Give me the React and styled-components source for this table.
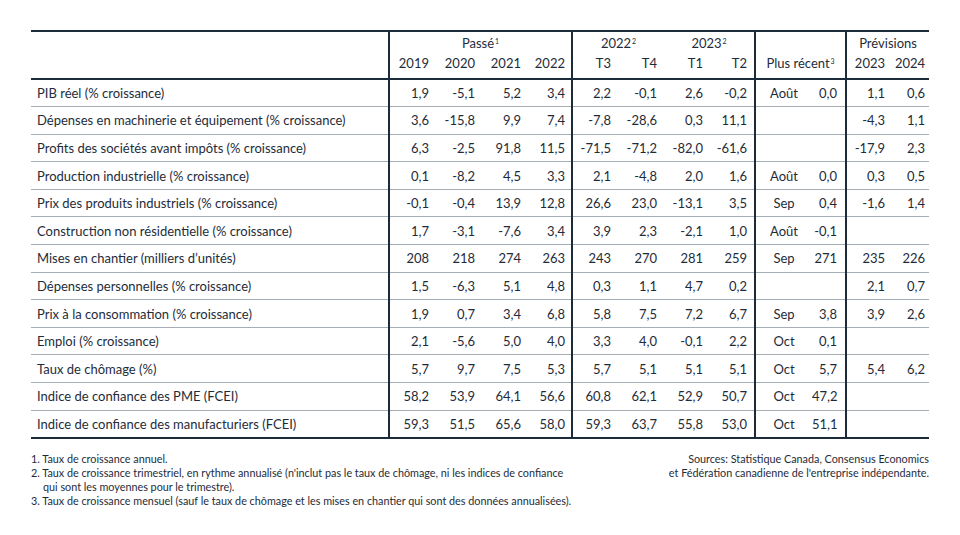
import React from 'react';
import styled, { createGlobalStyle } from 'styled-components';

const GlobalStyle = createGlobalStyle`
  html, body {
    margin: 0;
    padding: 0;
    background: #ffffff;
  }
  body {
    font-family: Lato, 'Liberation Sans', sans-serif;
    color: #1e2c3a;
  }
`;

const INK = '#1c2b39';
const RULE = '#a7afb6';

const Page = styled.div`
  width: 960px;
  height: 535px;
  box-sizing: border-box;
  padding: 30px 31px 0 31px;
`;

const Table = styled.table`
  width: 898px;
  border-collapse: collapse;
  table-layout: fixed;
  border-top: 2px solid ${INK};
  border-bottom: 2px solid ${INK};
  font-size: 13px;
  color: #1e2c3a;
`;

const HeadCell = styled.th`
  font-weight: 400;
  padding: ${p => (p.$last ? '1px' : '0')} ${p => p.$pad ?? 7}px ${p => (p.$last ? '7px' : '0')} 0;
  text-align: ${p => p.$align || 'right'};
  border-right: ${p => (p.$divider ? `2px solid ${INK}` : 'none')};
  border-bottom: ${p => (p.$last ? `2px solid ${INK}` : 'none')};
  height: ${p => (p.$last ? 15 : 23)}px;
  vertical-align: middle;
  white-space: nowrap;
  line-height: 15px;
`;

const Row = styled.tr`
  height: 27.6px;
  border-top: 1px solid ${RULE};
  &:first-child {
    border-top: none;
  }
`;

const Label = styled.td`
  padding: 0 0 0 6px;
  text-align: left;
  border-right: 2px solid ${INK};
  white-space: nowrap;
`;

const Num = styled.td`
  padding: 0 ${p => p.$pad ?? 7}px 0 0;
  text-align: ${p => p.$align || 'right'};
  border-right: ${p => (p.$divider ? `2px solid ${INK}` : 'none')};
  white-space: nowrap;
`;

const Sup = styled.sup`
  font-size: 7px;
  vertical-align: top;
  position: relative;
  top: -2px;
  margin-left: 1px;
`;

const Footer = styled.div`
  display: flex;
  justify-content: space-between;
  align-items: flex-start;
  margin-top: 13px;
  font-size: 10.8px;
  line-height: 14px;
  color: #1e2c3a;
`;

const Notes = styled.ol`
  list-style: none;
  margin: 0;
  padding: 0;
`;

const Note = styled.li`
  padding-left: 12px;
  text-indent: -12px;
`;

const Sources = styled.div`
  text-align: right;
`;

const rows = [
  ['PIB réel (% croissance)', ['1,9', '-5,1', '5,2', '3,4'], ['2,2', '-0,1', '2,6', '-0,2'], ['Août', '0,0'], ['1,1', '0,6']],
  ['Dépenses en machinerie et équipement (% croissance)', ['3,6', '-15,8', '9,9', '7,4'], ['-7,8', '-28,6', '0,3', '11,1'], ['', ''], ['-4,3', '1,1']],
  ['Profits des sociétés avant impôts (% croissance)', ['6,3', '-2,5', '91,8', '11,5'], ['-71,5', '-71,2', '-82,0', '-61,6'], ['', ''], ['-17,9', '2,3']],
  ['Production industrielle (% croissance)', ['0,1', '-8,2', '4,5', '3,3'], ['2,1', '-4,8', '2,0', '1,6'], ['Août', '0,0'], ['0,3', '0,5']],
  ['Prix des produits industriels (% croissance)', ['-0,1', '-0,4', '13,9', '12,8'], ['26,6', '23,0', '-13,1', '3,5'], ['Sep', '0,4'], ['-1,6', '1,4']],
  ['Construction non résidentielle (% croissance)', ['1,7', '-3,1', '-7,6', '3,4'], ['3,9', '2,3', '-2,1', '1,0'], ['Août', '-0,1'], ['', '']],
  ['Mises en chantier (milliers d\u2019unités)', ['208', '218', '274', '263'], ['243', '270', '281', '259'], ['Sep', '271'], ['235', '226']],
  ['Dépenses personnelles (% croissance)', ['1,5', '-6,3', '5,1', '4,8'], ['0,3', '1,1', '4,7', '0,2'], ['', ''], ['2,1', '0,7']],
  ['Prix à la consommation (% croissance)', ['1,9', '0,7', '3,4', '6,8'], ['5,8', '7,5', '7,2', '6,7'], ['Sep', '3,8'], ['3,9', '2,6']],
  ['Emploi (% croissance)', ['2,1', '-5,6', '5,0', '4,0'], ['3,3', '4,0', '-0,1', '2,2'], ['Oct', '0,1'], ['', '']],
  ['Taux de chômage (%)', ['5,7', '9,7', '7,5', '5,3'], ['5,7', '5,1', '5,1', '5,1'], ['Oct', '5,7'], ['5,4', '6,2']],
  ['Indice de confiance des PME (FCEI)', ['58,2', '53,9', '64,1', '56,6'], ['60,8', '62,1', '52,9', '50,7'], ['Oct', '47,2'], ['', '']],
  ['Indice de confiance des manufacturiers (FCEI)', ['59,3', '51,5', '65,6', '58,0'], ['59,3', '63,7', '55,8', '53,0'], ['Oct', '51,1'], ['', '']],
];

function Group({ values, pad }) {
  return values.map((v, i) => (
    <Num key={i} $pad={pad} $divider={i === values.length - 1}>{v}</Num>
  ));
}

export default function App() {
  return (
    <Page>
      <GlobalStyle />
      <Table>
        <colgroup>
          <col style={{ width: 358 }} />
          <col style={{ width: 46 }} />
          <col style={{ width: 46 }} />
          <col style={{ width: 46 }} />
          <col style={{ width: 45 }} />
          <col style={{ width: 46 }} />
          <col style={{ width: 46 }} />
          <col style={{ width: 46 }} />
          <col style={{ width: 45 }} />
          <col style={{ width: 57 }} />
          <col style={{ width: 34 }} />
          <col style={{ width: 42 }} />
          <col style={{ width: 41 }} />
        </colgroup>
        <thead>
          <tr>
            <HeadCell $divider />
            <HeadCell colSpan={4} $align="center" $pad={0} $divider>Passé<Sup>1</Sup></HeadCell>
            <HeadCell colSpan={2} $align="center" $pad={0}>2022<Sup>2</Sup></HeadCell>
            <HeadCell colSpan={2} $align="center" $pad={0} $divider>2023<Sup>2</Sup></HeadCell>
            <HeadCell colSpan={2} $divider />
            <HeadCell colSpan={2} $align="center" $pad={0}>Prévisions</HeadCell>
          </tr>
          <tr>
            <HeadCell $last $divider />
            <HeadCell $last $pad={6}>2019</HeadCell>
            <HeadCell $last $pad={6}>2020</HeadCell>
            <HeadCell $last $pad={6}>2021</HeadCell>
            <HeadCell $last $pad={6} $divider>2022</HeadCell>
            <HeadCell $last>T3</HeadCell>
            <HeadCell $last>T4</HeadCell>
            <HeadCell $last>T1</HeadCell>
            <HeadCell $last $divider>T2</HeadCell>
            <HeadCell $last colSpan={2} $align="center" $pad={0} $divider>Plus récent<Sup>3</Sup></HeadCell>
            <HeadCell $last $pad={3}>2023</HeadCell>
            <HeadCell $last $pad={4}>2024</HeadCell>
          </tr>
        </thead>
        <tbody>
          {rows.map(([label, past, quarters, recent, forecast]) => (
            <Row key={label}>
              <Label>{label}</Label>
              <Group values={past} pad={6} />
              <Group values={quarters} pad={7} />
              <Num $align="center" $pad={0}>{recent[0]}</Num>
              <Num $pad={8} $divider>{recent[1]}</Num>
              <Num $pad={3}>{forecast[0]}</Num>
              <Num $pad={4}>{forecast[1]}</Num>
            </Row>
          ))}
        </tbody>
      </Table>
      <Footer>
        <Notes>
          <Note>1. Taux de croissance annuel.</Note>
          <Note>
            2. Taux de croissance trimestriel, en rythme annualisé (n'inclut pas le taux de chômage, ni les indices de confiance
            <br />qui sont les moyennes pour le trimestre).
          </Note>
          <Note>3. Taux de croissance mensuel (sauf le taux de chômage et les mises en chantier qui sont des données annualisées).</Note>
        </Notes>
        <Sources>
          Sources: Statistique Canada, Consensus Economics
          <br />et Fédération canadienne de l'entreprise indépendante.
        </Sources>
      </Footer>
    </Page>
  );
}
